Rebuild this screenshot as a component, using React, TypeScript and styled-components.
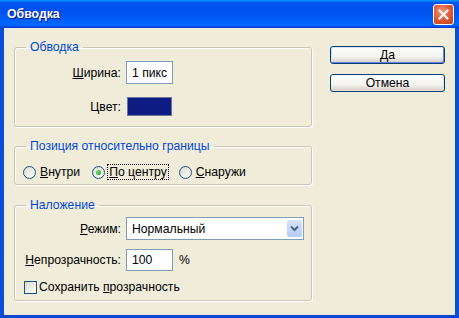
import React from "react";
import styled, { createGlobalStyle } from "styled-components";

const GlobalStyle = createGlobalStyle`
  html, body {
    margin: 0;
    padding: 0;
  }
  body {
    font-family: "Liberation Sans", Arial, sans-serif;
    font-size: 12.2px;
    color: #000;
    background: #efecda;
  }
`;

const Window = styled.div`
  width: 459px;
  height: 318px;
  display: flex;
  flex-direction: column;
  overflow: hidden;
`;

const TitleBar = styled.header`
  height: 28px;
  flex-shrink: 0;
  display: flex;
  align-items: center;
  justify-content: space-between;
  padding: 0 5px 0 7px;
  box-sizing: border-box;
  background: linear-gradient(
    to bottom,
    #0997ff 0%,
    #0053ee 10%,
    #0050ee 40%,
    #0066ff 85%,
    #005bff 93%,
    #003dd7 97%,
    #003dd7 100%
  );
`;

const Title = styled.span`
  color: #fff;
  font-weight: bold;
  font-size: 12.3px;
  text-shadow: 1px 1px 0 #0a1883;
`;

const CloseBtn = styled.button`
  width: 21px;
  height: 21px;
  padding: 0;
  border: 1px solid #fff;
  border-radius: 3px;
  background: radial-gradient(circle at 40% 35%, #f39a7c 0%, #e0603d 45%, #c43a17 100%);
  display: flex;
  align-items: center;
  justify-content: center;
  margin-top: 1px;
`;

const Frame = styled.div`
  flex: 1;
  display: flex;
  border-left: 4px solid #0b4fd9;
  border-right: 4px solid #0b4fd9;
  border-bottom: 3px solid #0a47d0;
  padding: 12px 10px 0 10px;
  background: #efecda;
`;

const LeftColumn = styled.div`
  width: 298px;
  display: flex;
  flex-direction: column;
`;

const RightColumn = styled.div`
  margin-left: 18px;
  padding-top: 6px;
  display: flex;
  flex-direction: column;
  gap: 10px;
`;

const Group = styled.fieldset<{ $top: number; $pad: string }>`
  margin: ${(p) => p.$top}px 0 0 0;
  padding: ${(p) => p.$pad};
  border: 1px solid #c9c6b4;
  border-radius: 3px;
  box-shadow: inset 1px 1px 0 #fff, 1px 1px 0 #fff;
  min-width: 0;
`;

const Legend = styled.legend`
  color: #0046d5;
  margin-left: 11px;
  padding: 0 4px;
  line-height: 15px;
`;

const FormGrid = styled.div<{ $rowGap: number }>`
  display: grid;
  grid-template-columns: 106px auto;
  column-gap: 5px;
  row-gap: ${(p) => p.$rowGap}px;
  align-items: center;
`;

const Label = styled.label`
  justify-self: end;
  white-space: nowrap;
`;

const Field = styled.div<{ $w: number; $h: number }>`
  width: ${(p) => p.$w}px;
  height: ${(p) => p.$h}px;
  box-sizing: border-box;
  border: 1px solid #7f9db9;
  background: #fff;
  padding-left: 5px;
  display: flex;
  align-items: center;
  justify-content: space-between;
`;

const Swatch = styled.div`
  width: 45px;
  height: 19px;
  box-sizing: border-box;
  margin: 2px 0 2px 1px;
  border: 1px solid #6c7596;
  background: #0e1c84;
`;

const Inline = styled.div`
  display: flex;
  align-items: center;
  gap: 6px;
`;

const DropBtn = styled.span`
  width: 15px;
  align-self: stretch;
  margin: 2px 1px 2px 0;
  border-radius: 2px;
  background: linear-gradient(to bottom, #d6e2fd, #b7cbf9);
  display: flex;
  align-items: center;
  justify-content: center;
`;

const RadioRow = styled.div`
  display: flex;
  align-items: center;
  height: 16px;
  gap: 11px;
  padding-left: 8px;
`;

const Choice = styled.div`
  display: flex;
  align-items: center;
  gap: 3px;
`;

const RadioDot = styled.span<{ $checked?: boolean }>`
  width: 13px;
  height: 13px;
  box-sizing: border-box;
  border-radius: 50%;
  border: 1px solid #1c5180;
  background: linear-gradient(135deg, #dcd9cd, #fff);
  display: flex;
  align-items: center;
  justify-content: center;
  &::after {
    content: "";
    display: ${(p) => (p.$checked ? "block" : "none")};
    width: 5px;
    height: 5px;
    border-radius: 50%;
    background: radial-gradient(circle at 35% 35%, #6fe06f, #1c9a1c);
  }
`;

const ChoiceText = styled.span<{ $focused?: boolean }>`
  padding: 0 1px;
  line-height: 14px;
  outline: ${(p) => (p.$focused ? "1px dotted #000" : "none")};
`;

const CheckRow = styled.div`
  display: flex;
  align-items: center;
  gap: 2px;
  height: 16px;
  margin-top: 8px;
  padding-left: 9px;
`;

const CheckBox = styled.span`
  width: 13px;
  height: 13px;
  box-sizing: border-box;
  border: 1px solid #1c5180;
  background: linear-gradient(135deg, #dcd9cd, #fff);
`;

const Button = styled.button<{ $default?: boolean }>`
  width: 115px;
  height: 18px;
  padding: 0;
  font-family: inherit;
  font-size: 12.2px;
  color: #000;
  border: 1px solid #003c74;
  border-radius: 3px;
  background: linear-gradient(to bottom, #fff 0%, #f3f3ef 60%, #d6d0c5 100%);
  box-shadow: ${(p) =>
    p.$default
      ? "inset 1px 1px 0 #cee7ff, inset -1px -1px 0 #6982ee"
      : "inset -1px -1px 0 #e3e0d5"};
`;

const U = styled.u`
  text-decoration: underline;
`;

const Chevron = () => (
  <svg width="9" height="7" viewBox="0 0 9 7">
    <path d="M1 1.5 L4.5 5 L8 1.5" fill="none" stroke="#4d6185" strokeWidth="2" />
  </svg>
);

export default function App() {
  return (
    <>
      <GlobalStyle />
      <Window>
        <TitleBar>
          <Title>Обводка</Title>
          <CloseBtn aria-label="Закрыть">
            <svg width="11" height="11" viewBox="0 0 11 11">
              <path d="M1.5 1.5 L9.5 9.5 M9.5 1.5 L1.5 9.5" stroke="#fff" strokeWidth="2" strokeLinecap="square" />
            </svg>
          </CloseBtn>
        </TitleBar>
        <Frame>
          <LeftColumn>
            <Group $top={0} $pad="6px 0 8px 0">
              <Legend>Обводка</Legend>
              <FormGrid $rowGap={11}>
                <Label>
                  <U>Ш</U>ирина:
                </Label>
                <Field $w={47} $h={23}>1 пикс</Field>
                <Label>Цвет:</Label>
                <Swatch />
              </FormGrid>
            </Group>

            <Group $top={12} $pad="10px 0 4px 0">
              <Legend>Позиция относительно границы</Legend>
              <RadioRow>
                <Choice>
                  <RadioDot />
                  <ChoiceText>
                    <U>В</U>нутри
                  </ChoiceText>
                </Choice>
                <Choice>
                  <RadioDot $checked />
                  <ChoiceText $focused>
                    <U>П</U>о центру
                  </ChoiceText>
                </Choice>
                <Choice>
                  <RadioDot />
                  <ChoiceText>
                    <U>С</U>наружи
                  </ChoiceText>
                </Choice>
              </RadioRow>
            </Group>

            <Group $top={13} $pad="4px 0 5px 0">
              <Legend>Наложение</Legend>
              <FormGrid $rowGap={9}>
                <Label>
                  <U>Р</U>ежим:
                </Label>
                <Field $w={178} $h={23}>
                  Нормальный
                  <DropBtn>
                    <Chevron />
                  </DropBtn>
                </Field>
                <Label>
                  <U>Н</U>епрозрачность:
                </Label>
                <Inline>
                  <Field $w={47} $h={22}>100</Field>
                  <span>%</span>
                </Inline>
              </FormGrid>
              <CheckRow>
                <CheckBox />
                <span>
                  Сохранить <U>п</U>розрачность
                </span>
              </CheckRow>
            </Group>
          </LeftColumn>
          <RightColumn>
            <Button $default>Да</Button>
            <Button>Отмена</Button>
          </RightColumn>
        </Frame>
      </Window>
    </>
  );
}
